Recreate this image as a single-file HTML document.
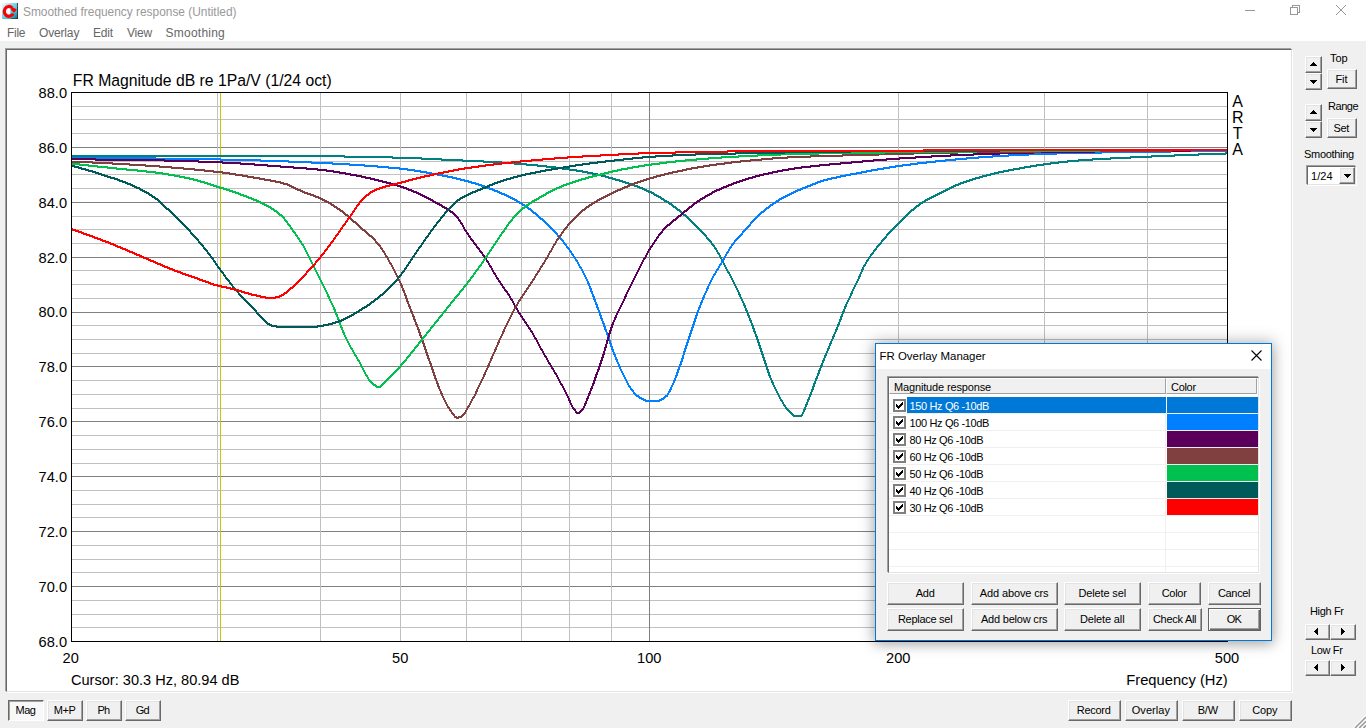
<!DOCTYPE html>
<html lang="en"><head><meta charset="utf-8"><title>Smoothed frequency response (Untitled)</title>
<style>
html,body{margin:0;padding:0}
body{width:1366px;height:728px;overflow:hidden;background:#f0f0f0;position:relative;font-family:"Liberation Sans",Arial,sans-serif;color:#000}
.a{position:absolute}
#top{left:0;top:0;width:1366px;height:41px;background:#fff}
#ttl{left:23px;top:4px;font-size:11.9px;line-height:16px;color:#999;white-space:nowrap}
.mi{top:25px;font-size:12px;line-height:16px;color:#666;white-space:nowrap}
#panel{left:6px;top:49px;width:1284px;height:641px;background:#fff;border:1px solid;border-color:#696969 #e3e3e3 #e3e3e3 #696969;box-shadow:-1px -1px 0 #a0a0a0, 1px 1px 0 #fff;margin:0}
.ui{font-size:11px;white-space:nowrap}
.btn{position:absolute;box-sizing:border-box;background:#f0f0f0;border:1px solid;border-color:#fff #696969 #696969 #fff;box-shadow:inset -1px -1px 0 #a0a0a0, inset 1px 1px 0 #e3e3e3;font-size:11px;text-align:center;white-space:nowrap;overflow:hidden;text-indent:-.5px}
.btn.dn{border-color:#696969 #fff #fff #696969;box-shadow:inset 1px 1px 0 #a0a0a0;background:#f8f8f8}
.btn.def{border:1px solid #646464;box-shadow:inset 1px 1px 0 #fff, inset -1px -1px 0 #696969, inset -2px -2px 0 #a0a0a0}
.lbl{position:absolute;font-size:11px;white-space:nowrap;line-height:13px}
.tri{position:absolute;width:0;height:0;border-style:solid}
#dlg{left:875px;top:343px;width:395px;height:296px;border:1px solid #0078d7;background:#f0f0f0;box-shadow:0 0 14px 2px rgba(0,0,0,.26), 0 4px 10px rgba(0,0,0,.13)}
#dt{left:0;top:0;width:395px;height:25px;background:#fff}
#dtt{left:3.5px;top:4px;font-size:11.45px;line-height:16px;white-space:nowrap}
#lv{left:12px;top:33px;width:369px;height:194px;background:#fff;border:1px solid;border-color:#696969 #e3e3e3 #e3e3e3 #696969;box-shadow:-1px -1px 0 #a0a0a0, 1px 1px 0 #fff;overflow:hidden}
.hd{position:absolute;top:0;height:16px;box-sizing:border-box;background:#f0f0f0;border:1px solid;border-color:#fff #a0a0a0 #a0a0a0 #fff;font-size:11px;line-height:16px;padding-left:4px;white-space:nowrap;overflow:hidden}
.row{position:absolute;left:0;width:369px;height:16px;font-size:11px;line-height:16px;white-space:nowrap}
.cb{position:absolute;left:4px;top:2px;width:9px;height:9px;border:2px solid #808080;background:#fff;line-height:0}
.rt{position:absolute;left:18px;top:0;height:16px;line-height:18px;overflow:hidden;padding-left:2.6px;padding-right:3px}
.row.sel .rt{background:#0078d7;color:#fff;width:253.4px}
.sw{position:absolute;left:278px;top:0;width:91px;height:16px}
.hl{position:absolute;left:0;width:369px;height:1px;background:#f0f0f0}
#vl{position:absolute;left:276px;top:17px;width:1px;height:180px;background:#f0f0f0}
</style></head><body>
<div class="a" id="top"></div>
<svg class="a" style="left:2px;top:3px" width="16" height="16" viewBox="0 0 16 16"><defs><linearGradient id="ig" x1="0" y1="0" x2="1" y2="1"><stop offset="0" stop-color="#fff"/><stop offset=".3" stop-color="#9fdcf2"/><stop offset=".7" stop-color="#35c0e0"/><stop offset="1" stop-color="#1a5a6a"/></linearGradient></defs><rect width="16" height="16" fill="url(#ig)"/><rect x="15" y="0" width="1" height="16" fill="#222" opacity=".75"/><rect x="9" y="15" width="7" height="1" fill="#222" opacity=".5"/><ellipse cx="5.8" cy="8.4" rx="2.6" ry="3.4" fill="#fff"/><path d="M11.2 10.6 A4.7 4.9 0 1 1 10 4.6" fill="none" stroke="#f00" stroke-width="3.2"/><path d="M8.8 3.2 L14.9 6.6 L12.2 9.7 L9.4 7.4 Z" fill="#f00"/></svg>
<div class="a" id="ttl">Smoothed frequency response (Untitled)</div>
<div class="a mi" style="left:7px;letter-spacing:-.29px">File</div><div class="a mi" style="left:39px;letter-spacing:-.16px">Overlay</div><div class="a mi" style="left:93px;letter-spacing:-.2px">Edit</div><div class="a mi" style="left:127px;letter-spacing:-.2px">View</div><div class="a mi" style="left:165.5px;letter-spacing:.24px">Smoothing</div>
<svg class="a" style="left:1230px;top:0" width="136" height="30" viewBox="0 0 136 30" fill="none" stroke="#999" stroke-width="1" shape-rendering="crispEdges"><path d="M15 10.5 H25"/><rect x="60.5" y="7.5" width="7" height="7"/><path d="M62.5 7.5 V5.5 H69.5 V12.5 H67.5"/><path d="M106 5 L116 15 M116 5 L106 15" shape-rendering="auto"/></svg>
<div class="a" id="panel"></div>
<svg class="a" style="left:0;top:0" width="1366" height="728" viewBox="0 0 1366 728"><defs><clipPath id="pc"><rect x="71" y="92" width="1157" height="550"/></clipPath></defs>
<g shape-rendering="crispEdges">
<rect x="72" y="106" width="1155" height="1" fill="#c0c0c0"/>
<rect x="72" y="119" width="1155" height="1" fill="#c0c0c0"/>
<rect x="72" y="133" width="1155" height="1" fill="#c0c0c0"/>
<rect x="72" y="147" width="1155" height="1" fill="#808080"/>
<rect x="72" y="161" width="1155" height="1" fill="#c0c0c0"/>
<rect x="72" y="174" width="1155" height="1" fill="#c0c0c0"/>
<rect x="72" y="188" width="1155" height="1" fill="#c0c0c0"/>
<rect x="72" y="202" width="1155" height="1" fill="#808080"/>
<rect x="72" y="216" width="1155" height="1" fill="#c0c0c0"/>
<rect x="72" y="229" width="1155" height="1" fill="#c0c0c0"/>
<rect x="72" y="243" width="1155" height="1" fill="#c0c0c0"/>
<rect x="72" y="257" width="1155" height="1" fill="#808080"/>
<rect x="72" y="270" width="1155" height="1" fill="#c0c0c0"/>
<rect x="72" y="284" width="1155" height="1" fill="#c0c0c0"/>
<rect x="72" y="298" width="1155" height="1" fill="#c0c0c0"/>
<rect x="72" y="312" width="1155" height="1" fill="#808080"/>
<rect x="72" y="325" width="1155" height="1" fill="#c0c0c0"/>
<rect x="72" y="339" width="1155" height="1" fill="#c0c0c0"/>
<rect x="72" y="353" width="1155" height="1" fill="#c0c0c0"/>
<rect x="72" y="366" width="1155" height="1" fill="#808080"/>
<rect x="72" y="380" width="1155" height="1" fill="#c0c0c0"/>
<rect x="72" y="394" width="1155" height="1" fill="#c0c0c0"/>
<rect x="72" y="408" width="1155" height="1" fill="#c0c0c0"/>
<rect x="72" y="421" width="1155" height="1" fill="#808080"/>
<rect x="72" y="435" width="1155" height="1" fill="#c0c0c0"/>
<rect x="72" y="449" width="1155" height="1" fill="#c0c0c0"/>
<rect x="72" y="463" width="1155" height="1" fill="#c0c0c0"/>
<rect x="72" y="476" width="1155" height="1" fill="#808080"/>
<rect x="72" y="490" width="1155" height="1" fill="#c0c0c0"/>
<rect x="72" y="504" width="1155" height="1" fill="#c0c0c0"/>
<rect x="72" y="517" width="1155" height="1" fill="#c0c0c0"/>
<rect x="72" y="531" width="1155" height="1" fill="#808080"/>
<rect x="72" y="545" width="1155" height="1" fill="#c0c0c0"/>
<rect x="72" y="559" width="1155" height="1" fill="#c0c0c0"/>
<rect x="72" y="572" width="1155" height="1" fill="#c0c0c0"/>
<rect x="72" y="586" width="1155" height="1" fill="#808080"/>
<rect x="72" y="600" width="1155" height="1" fill="#c0c0c0"/>
<rect x="72" y="614" width="1155" height="1" fill="#c0c0c0"/>
<rect x="72" y="627" width="1155" height="1" fill="#c0c0c0"/>
<rect x="217" y="93" width="1" height="548" fill="#c0c0c0"/>
<rect x="320" y="93" width="1" height="548" fill="#c0c0c0"/>
<rect x="400" y="93" width="1" height="548" fill="#c0c0c0"/>
<rect x="466" y="93" width="1" height="548" fill="#c0c0c0"/>
<rect x="521" y="93" width="1" height="548" fill="#c0c0c0"/>
<rect x="569" y="93" width="1" height="548" fill="#c0c0c0"/>
<rect x="611" y="93" width="1" height="548" fill="#c0c0c0"/>
<rect x="649" y="93" width="1" height="548" fill="#808080"/>
<rect x="898" y="93" width="1" height="548" fill="#c0c0c0"/>
<rect x="1044" y="93" width="1" height="548" fill="#c0c0c0"/>
<rect x="1147" y="93" width="1" height="548" fill="#c0c0c0"/>
<rect x="220" y="93" width="1" height="548" fill="#c8c800"/>
</g>
<g fill="none" stroke-width="2" shape-rendering="crispEdges" stroke-linejoin="round" clip-path="url(#pc)">
<path d="M71 156 344 156 345 157 392 157 393 158 421 158 422 159 441 159 442 160 462 160 463 161 483 161 484 162 501 162 502 163 514 163 515 164 526 164 527 165 537 165 538 166 546 166 547 167 555 167 556 168 562 168 563 169 569 169 570 170 576 170 577 171 582 171 583 172 587 172 588 173 592 173 593 174 597 174 598 175 601 175 602 176 605 176 606 177 608 177 609 178 612 178 613 179 615 179 616 180 619 180 620 181 622 181 623 182 625 182 626 183 628 183 629 184 631 184 632 185 634 185 635 186 637 186 638 187 639 187 640 188 642 188 643 189 644 189 645 190 646 190 647 191 648 191 649 192 651 192 652 193 653 193 654 194 655 195 656 195 657 196 658 196 659 197 660 197 661 198 662 199 663 199 664 200 665 201 666 201 667 202 668 202 669 203 670 204 671 204 672 205 673 206 674 207 675 207 676 208 677 209 678 210 679 210 680 211 681 212 682 213 683 214 684 215 685 215 686 216 687 217 688 218 689 219 690 220 691 221 692 222 693 223 694 224 695 225 696 226 697 227 698 228 699 229 700 230 701 231 702 232 703 233 704 234 705 235 706 236 707 238 708 239 709 240 710 241 711 242 712 244 713 245 714 246 715 248 716 249 717 251 718 253 719 254 720 256 721 258 722 260 723 262 724 264 725 266 726 268 727 270 728 272 729 273 730 275 731 277 732 279 733 281 734 283 735 285 736 287 737 289 738 291 739 293 740 296 741 298 742 300 743 302 744 304 745 307 746 309 747 312 748 314 749 317 750 319 751 322 752 324 753 327 754 330 755 333 756 335 757 338 758 341 759 344 760 347 761 350 762 353 763 356 764 359 765 362 766 365 767 368 768 371 769 374 770 377 771 379 772 381 773 384 774 386 775 388 776 390 777 392 778 394 779 396 780 398 781 400 782 401 783 403 784 405 785 406 786 408 787 409 788 410 789 411 790 412 791 413 792 414 793 415 794 416 801 416 802 415 803 413 804 411 805 408 806 406 807 403 808 401 809 398 810 396 811 393 812 391 813 388 814 385 815 382 816 380 817 377 818 375 819 372 820 369 821 367 822 364 823 362 824 359 825 357 826 354 827 352 828 350 829 347 830 345 831 342 832 340 833 338 834 335 835 333 836 331 837 328 838 326 839 323 840 321 841 318 842 315 843 313 844 310 845 308 846 305 847 303 848 301 849 299 850 297 851 295 852 292 853 290 854 288 855 286 856 284 857 282 858 280 859 278 860 275 861 273 862 271 863 268 864 266 865 265 866 263 867 261 868 260 869 258 870 257 871 255 872 254 873 253 874 251 875 250 876 249 877 247 878 246 879 245 880 244 881 243 882 241 883 240 884 239 885 238 886 237 887 235 888 234 889 233 890 232 891 231 892 230 893 229 894 228 895 227 896 226 897 225 898 224 899 223 900 222 901 221 902 220 903 219 904 218 905 217 906 216 907 215 908 214 909 213 910 212 911 211 912 210 913 210 914 209 915 208 916 207 917 206 918 206 919 205 920 204 921 203 922 203 923 202 924 202 925 201 926 200 927 200 928 199 929 199 930 198 931 198 932 197 933 197 934 196 935 196 936 195 937 195 938 194 939 194 940 193 941 193 942 192 943 192 944 191 945 191 946 190 947 190 948 189 949 189 950 188 951 188 952 187 953 187 954 186 955 186 956 185 958 185 959 184 960 184 961 183 963 183 964 182 966 182 967 181 969 181 970 180 972 180 973 179 975 179 976 178 979 178 980 177 982 177 983 176 986 176 987 175 990 175 991 174 994 174 995 173 998 173 999 172 1003 172 1004 171 1008 171 1009 170 1013 170 1014 169 1019 169 1020 168 1024 168 1025 167 1030 167 1031 166 1036 166 1037 165 1043 165 1044 164 1050 164 1051 163 1058 163 1059 162 1067 162 1068 161 1078 161 1079 160 1092 160 1093 159 1110 159 1111 158 1130 158 1131 157 1151 157 1152 156 1174 156 1175 155 1198 155 1199 154 1225 154 1226 153 1228 153" stroke="#008080"/>
<path d="M71 158 155 158 156 159 220 159 221 160 260 160 261 161 288 161 289 162 311 162 312 163 332 163 333 164 349 164 350 165 364 165 365 166 377 166 378 167 388 167 389 168 399 168 400 169 407 169 408 170 414 170 415 171 420 171 421 172 426 172 427 173 431 173 432 174 437 174 438 175 442 175 443 176 447 176 448 177 452 177 453 178 456 178 457 179 460 179 461 180 464 180 465 181 468 181 469 182 471 182 472 183 475 183 476 184 478 184 479 185 481 185 482 186 484 186 485 187 486 187 487 188 489 188 490 189 492 189 493 190 494 190 495 191 497 191 498 192 499 192 500 193 501 193 502 194 504 194 505 195 506 195 507 196 508 196 509 197 510 197 511 198 512 198 513 199 514 199 515 200 516 200 517 201 518 202 519 202 520 203 521 203 522 204 523 205 524 205 525 206 526 206 527 207 528 208 529 209 530 209 531 210 532 211 533 212 534 213 535 213 536 214 537 215 538 216 539 217 540 218 541 219 542 219 543 220 544 221 545 222 546 223 547 224 548 225 549 226 550 227 551 228 552 229 553 230 554 231 555 232 556 233 557 234 558 236 559 237 560 238 561 239 562 240 563 241 564 243 565 244 566 245 567 247 568 248 569 249 570 251 571 252 572 254 573 255 574 257 575 258 576 260 577 261 578 263 579 265 580 267 581 268 582 270 583 272 584 274 585 276 586 278 587 280 588 282 589 285 590 287 591 290 592 293 593 295 594 298 595 301 596 303 597 306 598 309 599 311 600 314 601 317 602 320 603 322 604 325 605 328 606 331 607 333 608 336 609 339 610 342 611 345 612 348 613 351 614 353 615 356 616 358 617 361 618 363 619 365 620 368 621 370 622 372 623 374 624 376 625 378 626 380 627 382 628 384 629 386 630 387 631 389 632 390 633 391 634 393 635 394 636 395 637 396 638 396 639 397 640 398 641 398 642 399 643 399 644 400 645 400 646 401 659 401 660 400 661 400 662 399 663 399 664 398 665 397 666 396 667 396 668 394 669 392 670 391 671 388 672 386 673 384 674 382 675 379 676 377 677 374 678 371 679 368 680 366 681 363 682 360 683 357 684 353 685 350 686 347 687 344 688 341 689 338 690 335 691 332 692 329 693 326 694 323 695 320 696 317 697 314 698 311 699 309 700 306 701 304 702 301 703 299 704 296 705 294 706 292 707 290 708 287 709 285 710 283 711 281 712 279 713 277 714 275 715 274 716 272 717 270 718 269 719 267 720 265 721 264 722 262 723 260 724 259 725 257 726 255 727 253 728 252 729 250 730 248 731 247 732 245 733 244 734 243 735 241 736 240 737 239 738 238 739 237 740 236 741 235 742 234 743 232 744 231 745 230 746 229 747 228 748 227 749 226 750 225 751 223 752 222 753 221 754 220 755 219 756 218 757 217 758 216 759 215 760 214 761 213 762 212 763 212 764 211 765 210 766 209 767 208 768 208 769 207 770 206 771 205 772 205 773 204 774 203 775 203 776 202 777 201 778 201 779 200 780 199 781 199 782 198 783 198 784 197 785 197 786 196 787 196 788 195 789 195 790 194 791 194 792 193 793 193 794 192 795 192 796 191 797 191 798 190 800 190 801 189 802 189 803 188 805 188 806 187 807 187 808 186 810 186 811 185 812 185 813 184 815 184 816 183 817 183 818 182 820 182 821 181 823 181 824 180 827 180 828 179 831 179 832 178 836 178 837 177 840 177 841 176 845 176 846 175 850 175 851 174 856 174 857 173 861 173 862 172 866 172 867 171 871 171 872 170 877 170 878 169 883 169 884 168 889 168 890 167 895 167 896 166 902 166 903 165 910 165 911 164 917 164 918 163 926 163 927 162 935 162 936 161 945 161 946 160 955 160 956 159 966 159 967 158 978 158 979 157 992 157 993 156 1008 156 1009 155 1028 155 1029 154 1056 154 1057 153 1101 153 1102 152 1170 152 1171 151 1228 151" stroke="#0080ff"/>
<path d="M71 159 95 159 96 160 164 160 165 161 198 161 199 162 222 162 223 163 240 163 241 164 254 164 255 165 267 165 268 166 280 166 281 167 293 167 294 168 306 168 307 169 317 169 318 170 326 170 327 171 333 171 334 172 339 172 340 173 345 173 346 174 350 174 351 175 356 175 357 176 361 176 362 177 365 177 366 178 370 178 371 179 374 179 375 180 378 180 379 181 382 181 383 182 386 182 387 183 390 183 391 184 393 184 394 185 397 185 398 186 400 186 401 187 403 187 404 188 406 188 407 189 408 189 409 190 411 190 412 191 413 191 414 192 416 192 417 193 418 193 419 194 420 194 421 195 422 195 423 196 424 196 425 197 426 197 427 198 428 198 429 199 430 199 431 200 432 200 433 201 434 202 435 202 436 203 437 203 438 204 439 204 440 205 441 205 442 206 443 207 444 207 445 208 446 208 447 209 448 209 449 210 450 211 451 212 452 212 453 213 454 214 455 215 456 216 457 217 458 218 459 220 460 221 461 223 462 224 463 226 464 228 465 230 466 231 467 233 468 234 469 236 470 237 471 239 472 240 473 241 474 243 475 244 476 245 477 247 478 248 479 249 480 251 481 252 482 253 483 255 484 256 485 257 486 259 487 261 488 262 489 264 490 266 491 267 492 269 493 271 494 273 495 274 496 276 497 278 498 279 499 281 500 282 501 284 502 285 503 287 504 288 505 290 506 291 507 292 508 294 509 295 510 297 511 299 512 300 513 302 514 304 515 306 516 308 517 309 518 311 519 313 520 314 521 316 522 317 523 319 524 320 525 322 526 323 527 325 528 326 529 328 530 329 531 331 532 332 533 334 534 336 535 338 536 339 537 341 538 343 539 345 540 347 541 349 542 350 543 352 544 354 545 356 546 357 547 359 548 361 549 363 550 364 551 366 552 368 553 369 554 371 555 373 556 374 557 376 558 378 559 380 560 382 561 384 562 385 563 387 564 389 565 391 566 393 567 395 568 397 569 399 570 402 571 404 572 406 573 408 574 409 575 410 576 412 577 413 579 413 580 412 581 411 582 410 583 409 584 407 585 405 586 402 587 400 588 397 589 395 590 392 591 390 592 387 593 385 594 382 595 379 596 376 597 373 598 371 599 368 600 365 601 362 602 359 603 356 604 353 605 349 606 346 607 342 608 339 609 335 610 332 611 329 612 326 613 323 614 321 615 319 616 316 617 314 618 312 619 310 620 308 621 306 622 304 623 302 624 300 625 298 626 295 627 293 628 291 629 289 630 287 631 285 632 283 633 281 634 279 635 277 636 275 637 273 638 271 639 269 640 267 641 265 642 263 643 261 644 259 645 258 646 256 647 254 648 252 649 250 650 249 651 247 652 246 653 244 654 243 655 241 656 240 657 238 658 237 659 235 660 234 661 233 662 232 663 230 664 229 665 228 666 227 667 226 668 225 669 225 670 224 671 223 672 222 673 221 674 220 675 220 676 219 677 218 678 217 679 216 680 216 681 215 682 214 683 213 684 212 685 211 686 211 687 210 688 209 689 208 690 207 691 207 692 206 693 205 694 204 695 203 696 203 697 202 698 201 699 201 700 200 701 199 702 199 703 198 704 198 705 197 706 196 707 196 708 195 709 195 710 194 711 194 712 193 713 192 714 192 715 191 716 191 717 190 719 190 720 189 721 189 722 188 723 188 724 187 726 187 727 186 728 186 729 185 731 185 732 184 733 184 734 183 736 183 737 182 739 182 740 181 742 181 743 180 745 180 746 179 748 179 749 178 752 178 753 177 755 177 756 176 759 176 760 175 763 175 764 174 768 174 769 173 772 173 773 172 777 172 778 171 782 171 783 170 788 170 789 169 794 169 795 168 801 168 802 167 810 167 811 166 819 166 820 165 829 165 830 164 840 164 841 163 851 163 852 162 862 162 863 161 873 161 874 160 886 160 887 159 899 159 900 158 915 158 916 157 931 157 932 156 950 156 951 155 973 155 974 154 999 154 1000 153 1033 153 1034 152 1094 152 1095 151 1190 151 1191 150 1228 150" stroke="#5a005a"/>
<path d="M71 162 92 162 93 163 112 163 113 164 129 164 130 165 145 165 146 166 159 166 160 167 171 167 172 168 183 168 184 169 194 169 195 170 204 170 205 171 213 171 214 172 222 172 223 173 229 173 230 174 235 174 236 175 242 175 243 176 247 176 248 177 253 177 254 178 259 178 260 179 264 179 265 180 270 180 271 181 275 181 276 182 280 182 281 183 283 183 284 184 287 184 288 185 289 185 290 186 291 186 292 187 293 187 294 188 295 188 296 189 297 189 298 190 300 190 301 191 302 191 303 192 304 192 305 193 307 193 308 194 310 194 311 195 313 195 314 196 315 196 316 197 318 197 319 198 320 198 321 199 322 199 323 200 324 200 325 201 326 201 327 202 328 202 329 203 330 203 331 204 332 205 333 205 334 206 335 207 336 207 337 208 338 209 339 209 340 210 341 211 342 211 343 212 344 213 345 214 346 215 347 215 348 216 349 217 350 218 351 219 352 220 353 221 354 222 355 222 356 223 357 224 358 225 359 226 360 227 361 228 362 229 363 230 364 230 365 231 366 232 367 233 368 234 369 235 370 236 371 236 372 237 373 238 374 239 375 240 376 242 377 243 378 244 379 245 380 246 381 248 382 249 383 251 384 252 385 254 386 256 387 257 388 259 389 261 390 263 391 264 392 266 393 268 394 270 395 272 396 274 397 276 398 278 399 280 400 282 401 284 402 287 403 289 404 292 405 294 406 297 407 300 408 303 409 305 410 308 411 310 412 313 413 315 414 318 415 321 416 323 417 326 418 328 419 331 420 334 421 337 422 339 423 342 424 345 425 348 426 351 427 354 428 357 429 360 430 362 431 365 432 368 433 371 434 374 435 377 436 380 437 382 438 385 439 388 440 390 441 392 442 395 443 397 444 399 445 401 446 403 447 405 448 407 449 408 450 410 451 411 452 413 453 414 454 415 455 417 456 417 457 418 458 418 459 417 461 417 462 416 463 415 464 414 465 413 466 411 467 409 468 407 469 406 470 404 471 402 472 400 473 398 474 397 475 395 476 393 477 390 478 388 479 386 480 384 481 382 482 380 483 378 484 376 485 373 486 371 487 369 488 367 489 364 490 362 491 360 492 357 493 355 494 353 495 351 496 348 497 346 498 344 499 341 500 339 501 337 502 335 503 333 504 330 505 328 506 326 507 324 508 322 509 320 510 318 511 316 512 314 513 312 514 310 515 308 516 306 517 305 518 303 519 301 520 300 521 298 522 297 523 295 524 294 525 292 526 291 527 289 528 288 529 286 530 285 531 283 532 282 533 280 534 279 535 277 536 275 537 274 538 272 539 271 540 269 541 267 542 266 543 264 544 263 545 261 546 259 547 258 548 256 549 254 550 252 551 251 552 249 553 247 554 245 555 244 556 242 557 240 558 239 559 237 560 236 561 235 562 233 563 232 564 230 565 229 566 228 567 227 568 225 569 224 570 223 571 222 572 221 573 220 574 219 575 218 576 217 577 216 578 215 579 214 580 213 581 212 582 211 583 210 584 210 585 209 586 208 587 207 588 207 589 206 590 205 591 205 592 204 593 203 594 203 595 202 596 202 597 201 598 200 599 200 600 199 601 199 602 198 603 198 604 197 605 197 606 196 607 196 608 195 609 195 610 194 611 194 612 193 613 193 614 192 615 192 616 191 617 191 618 190 620 190 621 189 622 189 623 188 624 188 625 187 627 187 628 186 629 186 630 185 632 185 633 184 634 184 635 183 637 183 638 182 640 182 641 181 643 181 644 180 646 180 647 179 649 179 650 178 653 178 654 177 656 177 657 176 660 176 661 175 664 175 665 174 668 174 669 173 672 173 673 172 677 172 678 171 682 171 683 170 686 170 687 169 691 169 692 168 697 168 698 167 703 167 704 166 709 166 710 165 716 165 717 164 724 164 725 163 731 163 732 162 740 162 741 161 750 161 751 160 761 160 762 159 772 159 773 158 787 158 788 157 810 157 811 156 842 156 843 155 878 155 879 154 913 154 914 153 957 153 958 152 1040 152 1041 151 1171 151 1172 150 1228 150" stroke="#804040"/>
<path d="M71 164 79 164 80 165 88 165 89 166 97 166 98 167 107 167 108 168 116 168 117 169 126 169 127 170 137 170 138 171 146 171 147 172 155 172 156 173 162 173 163 174 168 174 169 175 174 175 175 176 179 176 180 177 184 177 185 178 189 178 190 179 193 179 194 180 197 180 198 181 200 181 201 182 204 182 205 183 207 183 208 184 210 184 211 185 213 185 214 186 216 186 217 187 219 187 220 188 223 188 224 189 226 189 227 190 229 190 230 191 232 191 233 192 235 192 236 193 238 193 239 194 240 194 241 195 243 195 244 196 246 196 247 197 248 197 249 198 251 198 252 199 253 199 254 200 256 200 257 201 258 201 259 202 260 202 261 203 262 203 263 204 264 204 265 205 266 205 267 206 268 206 269 207 270 207 271 208 272 209 273 209 274 210 275 211 276 211 277 212 278 213 279 214 280 215 281 215 282 216 283 217 284 218 285 220 286 221 287 222 288 224 289 225 290 226 291 228 292 229 293 231 294 232 295 233 296 235 297 236 298 238 299 239 300 241 301 242 302 244 303 245 304 247 305 249 306 251 307 253 308 255 309 257 310 259 311 261 312 263 313 265 314 267 315 269 316 271 317 273 318 275 319 277 320 279 321 281 322 283 323 285 324 287 325 289 326 291 327 293 328 295 329 298 330 300 331 302 332 304 333 306 334 308 335 311 336 313 337 316 338 318 339 321 340 324 341 326 342 329 343 331 344 334 345 336 346 338 347 340 348 342 349 344 350 346 351 348 352 349 353 351 354 353 355 355 356 356 357 358 358 360 359 361 360 363 361 365 362 367 363 369 364 371 365 373 366 375 367 376 368 378 369 380 370 381 371 382 372 383 373 384 374 385 375 385 376 386 377 387 380 387 381 386 382 385 383 384 384 383 385 382 386 381 387 380 388 379 389 378 390 377 391 376 392 375 393 374 394 373 395 372 396 371 397 370 398 369 399 368 400 367 401 365 402 364 403 363 404 362 405 361 406 360 407 358 408 357 409 356 410 355 411 353 412 352 413 351 414 350 415 348 416 347 417 346 418 345 419 343 420 342 421 341 422 340 423 338 424 337 425 336 426 335 427 333 428 332 429 331 430 330 431 328 432 327 433 326 434 325 435 323 436 322 437 321 438 320 439 318 440 317 441 316 442 315 443 313 444 312 445 311 446 310 447 308 448 307 449 306 450 305 451 303 452 302 453 301 454 300 455 298 456 297 457 296 458 295 459 294 460 292 461 291 462 290 463 289 464 287 465 286 466 285 467 284 468 282 469 281 470 280 471 278 472 277 473 276 474 274 475 273 476 271 477 270 478 269 479 267 480 266 481 265 482 263 483 262 484 260 485 259 486 257 487 256 488 254 489 253 490 251 491 250 492 248 493 247 494 245 495 244 496 242 497 241 498 239 499 238 500 236 501 235 502 233 503 232 504 231 505 229 506 228 507 226 508 225 509 223 510 222 511 221 512 220 513 218 514 217 515 216 516 215 517 214 518 213 519 212 520 211 521 210 522 209 523 208 524 208 525 207 526 206 527 205 528 205 529 204 530 203 531 203 532 202 533 201 534 201 535 200 536 200 537 199 538 199 539 198 540 197 541 197 542 196 543 196 544 195 545 195 546 194 547 193 548 193 549 192 550 192 551 191 552 191 553 190 554 190 555 189 556 189 557 188 559 188 560 187 561 187 562 186 563 186 564 185 566 185 567 184 569 184 570 183 572 183 573 182 575 182 576 181 578 181 579 180 581 180 582 179 585 179 586 178 588 178 589 177 592 177 593 176 596 176 597 175 600 175 601 174 604 174 605 173 608 173 609 172 612 172 613 171 617 171 618 170 621 170 622 169 627 169 628 168 632 168 633 167 638 167 639 166 644 166 645 165 651 165 652 164 659 164 660 163 666 163 667 162 675 162 676 161 685 161 686 160 696 160 697 159 708 159 709 158 721 158 722 157 738 157 739 156 757 156 758 155 780 155 781 154 818 154 819 153 884 153 885 152 976 152 977 151 1099 151 1100 150 1228 150" stroke="#00c050"/>
<path d="M71 166 74 166 75 167 78 167 79 168 81 168 82 169 85 169 86 170 88 170 89 171 92 171 93 172 95 172 96 173 98 173 99 174 101 174 102 175 104 175 105 176 107 176 108 177 110 177 111 178 114 178 115 179 117 179 118 180 119 180 120 181 122 181 123 182 125 182 126 183 127 183 128 184 130 184 131 185 132 185 133 186 134 186 135 187 136 187 137 188 139 188 140 189 141 190 142 190 143 191 144 191 145 192 146 192 147 193 148 193 149 194 150 195 151 195 152 196 153 197 154 197 155 198 156 199 157 199 158 200 159 201 160 202 161 203 162 204 163 205 164 206 165 207 166 208 167 209 168 209 169 210 170 211 171 212 172 213 173 214 174 215 175 216 176 217 177 218 178 219 179 220 180 221 181 222 182 223 183 224 184 225 185 226 186 227 187 228 188 229 189 230 190 231 191 233 192 234 193 235 194 236 195 237 196 238 197 239 198 240 199 242 200 243 201 244 202 245 203 246 204 248 205 249 206 250 207 251 208 253 209 254 210 255 211 257 212 258 213 259 214 261 215 262 216 264 217 265 218 267 219 268 220 269 221 271 222 272 223 273 224 275 225 276 226 278 227 279 228 280 229 281 230 283 231 284 232 285 233 287 234 288 235 289 236 290 237 291 238 292 239 294 240 295 241 296 242 297 243 298 244 299 245 300 246 301 247 302 248 303 249 304 250 305 251 306 252 307 253 308 254 309 255 310 256 311 257 313 258 314 259 315 260 316 261 317 262 318 263 319 264 320 265 321 266 322 267 323 268 324 269 324 270 325 271 325 272 326 276 326 277 327 317 327 318 326 323 326 324 325 328 325 329 324 332 324 333 323 335 323 336 322 338 322 339 321 341 321 342 320 343 320 344 319 345 319 346 318 347 318 348 317 349 317 350 316 351 316 352 315 353 315 354 314 355 313 356 313 357 312 358 312 359 311 360 310 361 310 362 309 363 308 364 308 365 307 366 307 367 306 368 305 369 305 370 304 371 303 372 302 373 302 374 301 375 300 376 299 377 299 378 298 379 297 380 296 381 295 382 295 383 294 384 293 385 292 386 291 387 290 388 289 389 288 390 287 391 286 392 285 393 284 394 283 395 282 396 281 397 280 398 278 399 277 400 276 401 275 402 273 403 272 404 271 405 269 406 268 407 266 408 265 409 263 410 262 411 260 412 259 413 257 414 256 415 254 416 253 417 251 418 250 419 248 420 247 421 246 422 244 423 243 424 241 425 240 426 238 427 237 428 236 429 234 430 233 431 231 432 230 433 229 434 227 435 226 436 225 437 223 438 222 439 221 440 220 441 218 442 217 443 216 444 215 445 213 446 212 447 211 448 210 449 209 450 208 451 207 452 206 453 205 454 204 455 203 456 202 457 201 458 200 459 200 460 199 461 198 462 198 463 197 464 197 465 196 466 196 467 195 468 195 469 194 470 194 471 193 472 193 473 192 475 192 476 191 477 191 478 190 480 190 481 189 482 189 483 188 485 188 486 187 487 187 488 186 489 186 490 185 492 185 493 184 494 184 495 183 497 183 498 182 500 182 501 181 503 181 504 180 506 180 507 179 510 179 511 178 513 178 514 177 517 177 518 176 521 176 522 175 525 175 526 174 530 174 531 173 535 173 536 172 540 172 541 171 545 171 546 170 551 170 552 169 557 169 558 168 563 168 564 167 569 167 570 166 575 166 576 165 582 165 583 164 589 164 590 163 597 163 598 162 605 162 606 161 614 161 615 160 623 160 624 159 632 159 633 158 642 158 643 157 655 157 656 156 672 156 673 155 695 155 696 154 735 154 736 153 784 153 785 152 850 152 851 151 999 151 1000 150 1228 150" stroke="#005a5a"/>
<path d="M71 229 72 229 73 230 75 230 76 231 78 231 79 232 81 232 82 233 83 233 84 234 86 234 87 235 89 235 90 236 92 236 93 237 94 237 95 238 97 238 98 239 100 239 101 240 102 240 103 241 105 241 106 242 108 242 109 243 110 243 111 244 113 244 114 245 115 245 116 246 117 246 118 247 120 247 121 248 122 248 123 249 125 249 126 250 127 250 128 251 129 251 130 252 132 252 133 253 134 253 135 254 136 254 137 255 139 255 140 256 141 256 142 257 143 257 144 258 146 258 147 259 148 259 149 260 150 260 151 261 153 261 154 262 155 262 156 263 157 263 158 264 160 264 161 265 162 265 163 266 164 266 165 267 167 267 168 268 169 268 170 269 172 269 173 270 174 270 175 271 177 271 178 272 180 272 181 273 182 273 183 274 185 274 186 275 188 275 189 276 191 276 192 277 194 277 195 278 197 278 198 279 199 279 200 280 202 280 203 281 205 281 206 282 208 282 209 283 210 283 211 284 213 284 214 285 217 285 218 286 221 286 222 287 226 287 227 288 230 288 231 289 234 289 235 290 238 290 239 291 241 291 242 292 244 292 245 293 248 293 249 294 251 294 252 295 256 295 257 296 260 296 261 297 265 297 266 298 275 298 276 297 279 297 280 296 281 296 282 295 283 295 284 294 285 293 286 293 287 292 288 291 289 290 290 289 291 288 292 288 293 287 294 286 295 285 296 284 297 283 298 282 299 281 300 280 301 279 302 278 303 277 304 276 305 275 306 274 307 272 308 271 309 270 310 269 311 268 312 267 313 266 314 265 315 264 316 262 317 261 318 260 319 259 320 258 321 256 322 255 323 254 324 253 325 251 326 250 327 249 328 247 329 246 330 245 331 243 332 242 333 241 334 239 335 238 336 236 337 235 338 234 339 232 340 231 341 229 342 228 343 226 344 225 345 224 346 222 347 221 348 219 349 218 350 217 351 215 352 214 353 212 354 211 355 209 356 208 357 206 358 205 359 204 360 202 361 201 362 200 363 199 364 198 365 197 366 196 367 195 368 195 369 194 370 193 371 192 372 192 373 191 374 191 375 190 376 190 377 189 379 189 380 188 382 188 383 187 385 187 386 186 389 186 390 185 393 185 394 184 397 184 398 183 401 183 402 182 405 182 406 181 408 181 409 180 412 180 413 179 416 179 417 178 420 178 421 177 424 177 425 176 429 176 430 175 433 175 434 174 438 174 439 173 443 173 444 172 448 172 449 171 453 171 454 170 458 170 459 169 464 169 465 168 471 168 472 167 478 167 479 166 485 166 486 165 493 165 494 164 501 164 502 163 511 163 512 162 520 162 521 161 531 161 532 160 542 160 543 159 554 159 555 158 567 158 568 157 582 157 583 156 600 156 601 155 618 155 619 154 638 154 639 153 675 153 676 152 727 152 728 151 923 151 924 150 1228 150" stroke="#ff0000"/>
</g>
<g shape-rendering="crispEdges" fill="#000"><rect x="71" y="92" width="1157" height="1"/><rect x="71" y="641" width="1157" height="1"/><rect x="71" y="92" width="1" height="550"/><rect x="1227" y="92" width="1" height="550"/></g>
<g font-family="'Liberation Sans',Arial,sans-serif" fill="#000">
<text x="67" y="97.8" font-size="14.6" text-anchor="end">88.0</text>
<text x="67" y="152.7" font-size="14.6" text-anchor="end">86.0</text>
<text x="67" y="207.6" font-size="14.6" text-anchor="end">84.0</text>
<text x="67" y="262.5" font-size="14.6" text-anchor="end">82.0</text>
<text x="67" y="317.4" font-size="14.6" text-anchor="end">80.0</text>
<text x="67" y="372.3" font-size="14.6" text-anchor="end">78.0</text>
<text x="67" y="427.2" font-size="14.6" text-anchor="end">76.0</text>
<text x="67" y="482.1" font-size="14.6" text-anchor="end">74.0</text>
<text x="67" y="537.0" font-size="14.6" text-anchor="end">72.0</text>
<text x="67" y="591.9" font-size="14.6" text-anchor="end">70.0</text>
<text x="67" y="646.8" font-size="14.6" text-anchor="end">68.0</text>
<text x="70.7" y="662.6" font-size="14.6" text-anchor="middle">20</text>
<text x="400.2" y="662.6" font-size="14.6" text-anchor="middle">50</text>
<text x="649.2" y="662.6" font-size="14.6" text-anchor="middle">100</text>
<text x="898.2" y="662.6" font-size="14.6" text-anchor="middle">200</text>
<text x="1227.0" y="662.6" font-size="14.6" text-anchor="middle">500</text>
<text x="72.8" y="86" font-size="15.74">FR Magnitude dB re 1Pa/V (1/24 oct)</text>
<text x="71" y="685" font-size="14.57">Cursor: 30.3 Hz, 80.94 dB</text>
<text x="1227.7" y="685.3" font-size="14.73" text-anchor="end">Frequency (Hz)</text>
<text x="1237.7" y="107" font-size="16" text-anchor="middle">A</text>
<text x="1237.7" y="123" font-size="16" text-anchor="middle">R</text>
<text x="1237.7" y="139" font-size="16" text-anchor="middle">T</text>
<text x="1237.7" y="155" font-size="16" text-anchor="middle">A</text>
</g>
</svg>
<!-- right controls -->
<div class="btn" style="left:1305px;top:56px;width:17px;height:17px"><svg class="a" style="left:4px;top:5px" width="7" height="4" viewBox="0 0 7 4" shape-rendering="crispEdges"><path d="M3 0h1v1h1v1h1v1h1v1h-7v-1h1v-1h1v-1h1z"/></svg></div>
<div class="btn" style="left:1305px;top:73px;width:17px;height:17px"><svg class="a" style="left:4px;top:6px" width="7" height="4" viewBox="0 0 7 4" shape-rendering="crispEdges"><path d="M0 0h7v1h-1v1h-1v1h-1v1h-1v-1h-1v-1h-1v-1h-1z"/></svg></div>
<div class="lbl" style="left:1330px;top:52px"><span style="letter-spacing:-0.05px;margin-right:0.05px">Top</span></div>
<div class="btn" style="left:1327px;top:69px;width:30px;height:20px;line-height:18px;text-indent:-1px">Fit</div>
<div class="btn" style="left:1305px;top:104px;width:17px;height:17px"><svg class="a" style="left:4px;top:5px" width="7" height="4" viewBox="0 0 7 4" shape-rendering="crispEdges"><path d="M3 0h1v1h1v1h1v1h1v1h-7v-1h1v-1h1v-1h1z"/></svg></div>
<div class="btn" style="left:1305px;top:121px;width:17px;height:17px"><svg class="a" style="left:4px;top:6px" width="7" height="4" viewBox="0 0 7 4" shape-rendering="crispEdges"><path d="M0 0h7v1h-1v1h-1v1h-1v1h-1v-1h-1v-1h-1v-1h-1z"/></svg></div>
<div class="lbl" style="left:1328px;top:100px"><span style="letter-spacing:-0.46px;margin-right:0.46px">Range</span></div>
<div class="btn" style="left:1327px;top:118px;width:30px;height:20px;line-height:18px;text-indent:-1px"><span style="letter-spacing:-0.34px;margin-right:0.34px">Set</span></div>
<div class="lbl" style="left:1304px;top:148px"><span style="letter-spacing:-0.30px;margin-right:0.30px">Smoothing</span></div>
<div class="a" style="left:1307px;top:166px;width:47px;height:17px;background:#fff;border:1px solid;border-color:#696969 #e3e3e3 #e3e3e3 #696969;box-shadow:-1px -1px 0 #a0a0a0,1px 1px 0 #fff;font-size:11px;line-height:18px"><span style="margin-left:3px"><span style="letter-spacing:0.04px;margin-right:-0.04px">1/24</span></span>
<div class="btn" style="left:31px;top:0;width:16px;height:17px"><svg class="a" style="left:4px;top:6px" width="7" height="4" viewBox="0 0 7 4" shape-rendering="crispEdges"><path d="M0 0h7v1h-1v1h-1v1h-1v1h-1v-1h-1v-1h-1v-1h-1z"/></svg></div></div>
<div class="lbl" style="left:1310px;top:605px"><span style="letter-spacing:-0.34px;margin-right:0.34px">High Fr</span></div>
<div class="btn" style="left:1305px;top:624px;width:25px;height:16px"><svg class="a" style="left:8px;top:3px" width="4" height="7" viewBox="0 0 4 7" shape-rendering="crispEdges"><path d="M3 0h1v7h-1v-1h-1v-1h-1v-1h-1v-1h1v-1h1v-1h1z"/></svg></div>
<div class="btn" style="left:1330px;top:624px;width:26px;height:16px"><svg class="a" style="left:10px;top:3px" width="4" height="7" viewBox="0 0 4 7" shape-rendering="crispEdges"><path d="M0 0h1v1h1v1h1v1h1v1h-1v1h-1v1h-1v1h-1z"/></svg></div>
<div class="lbl" style="left:1311px;top:644px"><span style="letter-spacing:-0.35px;margin-right:0.35px">Low Fr</span></div>
<div class="btn" style="left:1305px;top:660px;width:25px;height:16px"><svg class="a" style="left:8px;top:3px" width="4" height="7" viewBox="0 0 4 7" shape-rendering="crispEdges"><path d="M3 0h1v7h-1v-1h-1v-1h-1v-1h-1v-1h1v-1h1v-1h1z"/></svg></div>
<div class="btn" style="left:1330px;top:660px;width:26px;height:16px"><svg class="a" style="left:10px;top:3px" width="4" height="7" viewBox="0 0 4 7" shape-rendering="crispEdges"><path d="M0 0h1v1h1v1h1v1h1v1h-1v1h-1v1h-1v1h-1z"/></svg></div>
<!-- bottom buttons -->
<div class="btn dn" style="left:8px;top:700px;width:36px;height:21px;line-height:19px"><span style="letter-spacing:-0.47px;margin-right:0.47px">Mag</span></div>
<div class="btn" style="left:47px;top:700px;width:36px;height:21px;line-height:18px"><span style="letter-spacing:-0.35px;margin-right:0.35px">M+P</span></div>
<div class="btn" style="left:86px;top:700px;width:36px;height:21px;line-height:18px"><span style="letter-spacing:-0.74px;margin-right:0.74px">Ph</span></div>
<div class="btn" style="left:125px;top:700px;width:36px;height:21px;line-height:18px"><span style="letter-spacing:-0.90px;margin-right:0.90px">Gd</span></div>
<div class="btn" style="left:1068px;top:700px;width:53px;height:21px;line-height:18px;text-indent:-1.3px"><span style="letter-spacing:-0.29px;margin-right:0.29px">Record</span></div>
<div class="btn" style="left:1125px;top:700px;width:53px;height:21px;line-height:18px;text-indent:-1.3px"><span style="letter-spacing:0.04px;margin-right:-0.04px">Overlay</span></div>
<div class="btn" style="left:1182px;top:700px;width:53px;height:21px;line-height:18px;text-indent:-1.3px"><span style="letter-spacing:-0.16px;margin-right:0.16px">B/W</span></div>
<div class="btn" style="left:1239px;top:700px;width:53px;height:21px;line-height:18px;text-indent:-1.3px"><span style="letter-spacing:-0.15px;margin-right:0.15px">Copy</span></div>
<svg class="a" style="left:1350px;top:712px" width="16" height="16" viewBox="0 0 16 16" fill="none"><g stroke="#fff" stroke-width="1.2"><path d="M3.4 16 L16 3.4 M7.6 16 L16 7.6 M11.8 16 L16 11.8"/></g><g stroke="#999" stroke-width="1.5"><path d="M5 16 L16 5 M9.2 16 L16 9.2 M13.4 16 L16 13.4"/></g></svg>
<!-- dialog -->
<div class="a" id="dlg">
<div class="a" id="dt"></div><div class="a" id="dtt">FR Overlay Manager</div>
<svg class="a" style="left:374.5px;top:6.4px" width="11" height="11" viewBox="0 0 11 11"><path d="M0.5 0.5 L10.5 10.5 M10.5 0.5 L0.5 10.5" stroke="#000" stroke-width="1.1"/></svg>
<div class="a" id="lv">
<div class="hd" style="left:0;width:277px"><span style="letter-spacing:-0.15px;margin-right:0.15px">Magnitude response</span></div><div class="hd" style="left:277px;width:91px"><span style="letter-spacing:-0.30px;margin-right:0.30px">Color</span></div>
<div id="vl"></div>
<div class="row sel" style="top:19px"><span class="cb"><svg width="9" height="9" viewBox="0 0 9 9" shape-rendering="crispEdges" style="display:block"><path d="M7 1h1v1h-1zM6 2h2v1h-2zM1 3h1v1h-1zM5 3h3v1h-3zM1 4h2v1h-2zM4 4h3v1h-3zM1 5h5v1h-5zM2 6h3v1h-3zM3 7h1v1h-1z" fill="#000"/></svg></span><span class="rt"><span style="letter-spacing:-0.37px;margin-right:0.37px">150 Hz Q6 -10dB</span></span><span class="sw" style="background:#0078d7"></span></div>
<div class="row" style="top:36px"><span class="cb"><svg width="9" height="9" viewBox="0 0 9 9" shape-rendering="crispEdges" style="display:block"><path d="M7 1h1v1h-1zM6 2h2v1h-2zM1 3h1v1h-1zM5 3h3v1h-3zM1 4h2v1h-2zM4 4h3v1h-3zM1 5h5v1h-5zM2 6h3v1h-3zM3 7h1v1h-1z" fill="#000"/></svg></span><span class="rt"><span style="letter-spacing:-0.37px;margin-right:0.37px">100 Hz Q6 -10dB</span></span><span class="sw" style="background:#0080ff"></span></div>
<div class="row" style="top:53px"><span class="cb"><svg width="9" height="9" viewBox="0 0 9 9" shape-rendering="crispEdges" style="display:block"><path d="M7 1h1v1h-1zM6 2h2v1h-2zM1 3h1v1h-1zM5 3h3v1h-3zM1 4h2v1h-2zM4 4h3v1h-3zM1 5h5v1h-5zM2 6h3v1h-3zM3 7h1v1h-1z" fill="#000"/></svg></span><span class="rt"><span style="letter-spacing:-0.38px;margin-right:0.38px">80 Hz Q6 -10dB</span></span><span class="sw" style="background:#5a005a"></span></div>
<div class="row" style="top:70px"><span class="cb"><svg width="9" height="9" viewBox="0 0 9 9" shape-rendering="crispEdges" style="display:block"><path d="M7 1h1v1h-1zM6 2h2v1h-2zM1 3h1v1h-1zM5 3h3v1h-3zM1 4h2v1h-2zM4 4h3v1h-3zM1 5h5v1h-5zM2 6h3v1h-3zM3 7h1v1h-1z" fill="#000"/></svg></span><span class="rt"><span style="letter-spacing:-0.38px;margin-right:0.38px">60 Hz Q6 -10dB</span></span><span class="sw" style="background:#804040"></span></div>
<div class="row" style="top:87px"><span class="cb"><svg width="9" height="9" viewBox="0 0 9 9" shape-rendering="crispEdges" style="display:block"><path d="M7 1h1v1h-1zM6 2h2v1h-2zM1 3h1v1h-1zM5 3h3v1h-3zM1 4h2v1h-2zM4 4h3v1h-3zM1 5h5v1h-5zM2 6h3v1h-3zM3 7h1v1h-1z" fill="#000"/></svg></span><span class="rt"><span style="letter-spacing:-0.38px;margin-right:0.38px">50 Hz Q6 -10dB</span></span><span class="sw" style="background:#00c050"></span></div>
<div class="row" style="top:104px"><span class="cb"><svg width="9" height="9" viewBox="0 0 9 9" shape-rendering="crispEdges" style="display:block"><path d="M7 1h1v1h-1zM6 2h2v1h-2zM1 3h1v1h-1zM5 3h3v1h-3zM1 4h2v1h-2zM4 4h3v1h-3zM1 5h5v1h-5zM2 6h3v1h-3zM3 7h1v1h-1z" fill="#000"/></svg></span><span class="rt"><span style="letter-spacing:-0.38px;margin-right:0.38px">40 Hz Q6 -10dB</span></span><span class="sw" style="background:#005a5a"></span></div>
<div class="row" style="top:121px"><span class="cb"><svg width="9" height="9" viewBox="0 0 9 9" shape-rendering="crispEdges" style="display:block"><path d="M7 1h1v1h-1zM6 2h2v1h-2zM1 3h1v1h-1zM5 3h3v1h-3zM1 4h2v1h-2zM4 4h3v1h-3zM1 5h5v1h-5zM2 6h3v1h-3zM3 7h1v1h-1z" fill="#000"/></svg></span><span class="rt"><span style="letter-spacing:-0.38px;margin-right:0.38px">30 Hz Q6 -10dB</span></span><span class="sw" style="background:#ff0000"></span></div>
<div class="hl" style="top:35px"></div>
<div class="hl" style="top:52px"></div>
<div class="hl" style="top:69px"></div>
<div class="hl" style="top:86px"></div>
<div class="hl" style="top:103px"></div>
<div class="hl" style="top:120px"></div>
<div class="hl" style="top:137px"></div>
<div class="hl" style="top:154px"></div>
<div class="hl" style="top:171px"></div>
<div class="hl" style="top:188px"></div>
</div>
<div class="btn" style="left:11px;top:238px;width:77px;height:23px;line-height:20px"><span style="letter-spacing:-0.26px;margin-right:0.26px">Add</span></div>
<div class="btn" style="left:95px;top:238px;width:87px;height:23px;line-height:20px"><span style="letter-spacing:-0.13px;margin-right:0.13px">Add above crs</span></div>
<div class="btn" style="left:188px;top:238px;width:77px;height:23px;line-height:20px"><span style="letter-spacing:-0.13px;margin-right:0.13px">Delete sel</span></div>
<div class="btn" style="left:272px;top:238px;width:53px;height:23px;line-height:20px"><span style="letter-spacing:-0.30px;margin-right:0.30px">Color</span></div>
<div class="btn" style="left:332px;top:238px;width:53px;height:23px;line-height:20px"><span style="letter-spacing:-0.32px;margin-right:0.32px">Cancel</span></div>
<div class="btn" style="left:11px;top:264px;width:77px;height:23px;line-height:20px"><span style="letter-spacing:-0.28px;margin-right:0.28px">Replace sel</span></div>
<div class="btn" style="left:95px;top:264px;width:87px;height:23px;line-height:20px"><span style="letter-spacing:-0.20px;margin-right:0.20px">Add below crs</span></div>
<div class="btn" style="left:188px;top:264px;width:77px;height:23px;line-height:20px"><span style="letter-spacing:-0.13px;margin-right:0.13px">Delete all</span></div>
<div class="btn" style="left:272px;top:264px;width:54px;height:23px;line-height:20px"><span style="letter-spacing:-0.28px;margin-right:0.28px">Check All</span></div>
<div class="btn def" style="left:332px;top:264px;width:53px;height:23px;line-height:20px"><span style="letter-spacing:-0.66px;margin-right:0.66px">OK</span></div>
</div>
</body></html>
